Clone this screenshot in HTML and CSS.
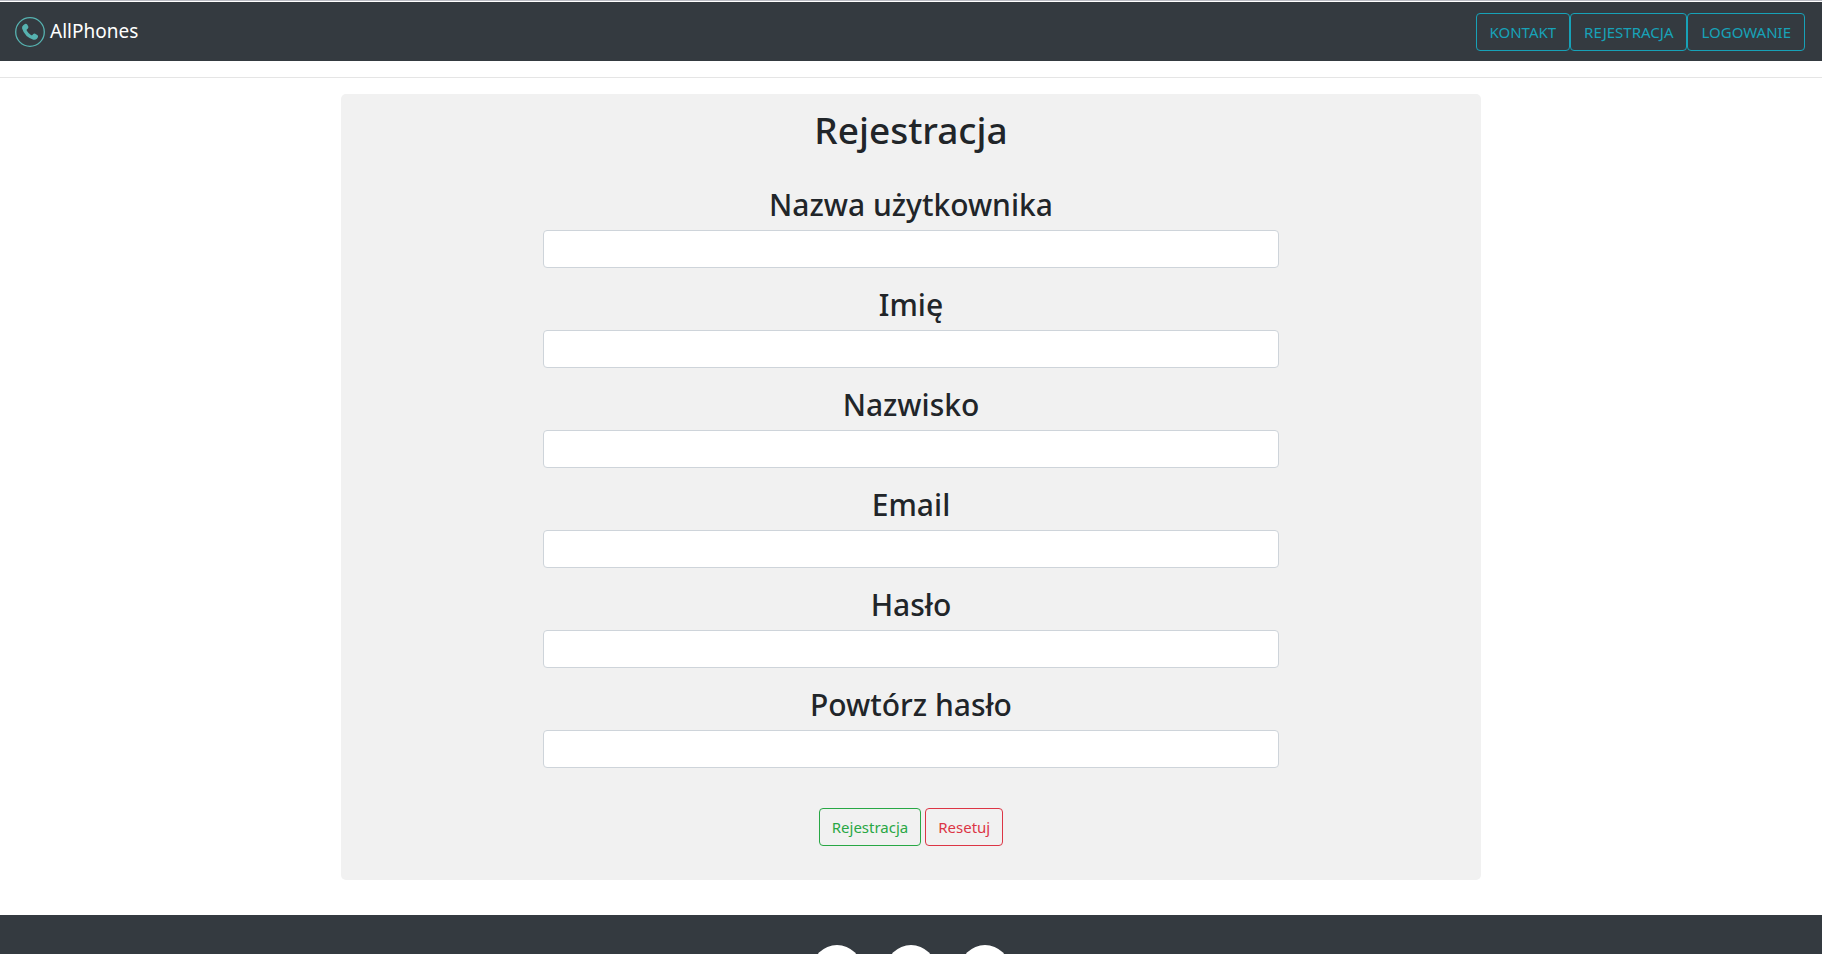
FILE: index.html
```html
<!DOCTYPE html>
<html lang="pl">
<head>
<meta charset="utf-8">
<title>AllPhones</title>
<meta name="viewport" content="width=device-width, initial-scale=1">
<link rel="stylesheet" href="styles.css">
</head>
<body>
<header class="navbar">
  <a class="brand" href="#">
    <svg class="brand-icon" viewBox="0 0 30 30" aria-hidden="true">
      <circle cx="15" cy="15" r="14.3" fill="none" stroke="#56b2b0" stroke-width="1.3"/>
      <path fill="#56b2b0" d="M8.2 8.2 L9.9 7 Q11.4 6.4 12.2 7.6 L13.3 9.6 Q13.7 11 12.7 11.8 L11.8 12.6 Q11.5 13.1 11.8 13.7 Q13.4 16.4 16.2 18.2 Q16.9 18.5 17.4 18 L18.3 17 Q19.1 16.2 20.2 16.7 L22.3 18 Q23.5 18.9 22.9 20.2 L21.9 21.7 Q20.6 23.2 18.4 22.7 Q9.8 20.2 7.1 11.6 Q6.6 9.5 8.2 8.2 Z"/>
    </svg>
    <span>AllPhones</span>
  </a>
  <nav class="nav-links">
    <a class="btn btn-info" href="#">KONTAKT</a>
    <a class="btn btn-info" href="#">REJESTRACJA</a>
    <a class="btn btn-info" href="#">LOGOWANIE</a>
  </nav>
</header>
<hr class="divider">
<main class="card">
  <h1 class="title">Rejestracja</h1>
  <form class="form">
    <div class="field"><label for="username">Nazwa użytkownika</label><input id="username" type="text"></div>
    <div class="field"><label for="first">Imię</label><input id="first" type="text"></div>
    <div class="field"><label for="last">Nazwisko</label><input id="last" type="text"></div>
    <div class="field"><label for="email">Email</label><input id="email" type="email"></div>
    <div class="field"><label for="pass">Hasło</label><input id="pass" type="password"></div>
    <div class="field"><label for="pass2">Powtórz hasło</label><input id="pass2" type="password"></div>
    <div class="actions">
      <button class="btn btn-success" type="submit">Rejestracja</button>
      <button class="btn btn-danger" type="reset">Resetuj</button>
    </div>
  </form>
</main>
<footer class="footer">
  <span class="disc"></span>
  <span class="disc"></span>
  <span class="disc"></span>
</footer>
</body>
</html>
```
FILE: styles.css
```css
* { box-sizing: border-box; }
html { scrollbar-width: none; }
body {
  margin: 0;
  border-top: 1px solid #b9bbc3;
  padding-top: 1px;
  background: #fff;
  color: #212529;
  font-family: "Noto Sans", "Open Sans", sans-serif;
  font-size: 15px;
  line-height: 24px;
}
.navbar {
  display: flex;
  align-items: center;
  justify-content: space-between;
  min-height: 59px;
  padding: 8px 17px 8px 15px;
  background: #343a40;
}
.brand {
  display: flex;
  align-items: center;
  gap: 5px;
  color: #fff;
  font-size: 19px;
  text-decoration: none;
}
.brand span { padding-bottom: 2px; }
.brand-icon { width: 30px; height: 30px; }
.nav-links { display: flex; }
.btn {
  padding: 6px 12px;
  border: 1px solid;
  border-radius: 4px;
  background: transparent;
  font: inherit;
  text-decoration: none;
}
.btn-info { padding: 6px 13px; color: #17a2b8; }
.btn-success { color: #28a745; }
.btn-danger { color: #dc3545; }
.divider {
  margin: 16px 0;
  border: 0;
  border-top: 1px solid #e5e5e5;
}
.card {
  max-width: 1140px;
  margin: 0 auto;
  padding: 12px 16px 34px;
  border-radius: 5px;
  background: #f1f1f1;
}
.title {
  margin: 0 0 32px;
  font-size: 37px;
  font-weight: 500;
  line-height: 48px;
  text-align: center;
}
.form {
  max-width: 736px;
  margin: 0 auto;
}
.field {
  display: flex;
  flex-direction: column;
  gap: 6px;
  margin-bottom: 18px;
}
.field label {
  font-size: 30px;
  font-weight: 500;
  line-height: 38px;
  text-align: center;
}
.field input {
  height: 38px;
  padding: 6px 12px;
  border: 1px solid #ced4da;
  border-radius: 4px;
  background: #fff;
  font: inherit;
}
.actions {
  display: flex;
  justify-content: center;
  gap: 4px;
  padding-top: 22px;
}
.footer {
  display: flex;
  justify-content: center;
  gap: 24px;
  margin-top: 35px;
  padding: 30px 16px;
  background: #343a40;
}
.disc {
  width: 50px;
  height: 50px;
  border-radius: 50%;
  background: #fff;
}
```
